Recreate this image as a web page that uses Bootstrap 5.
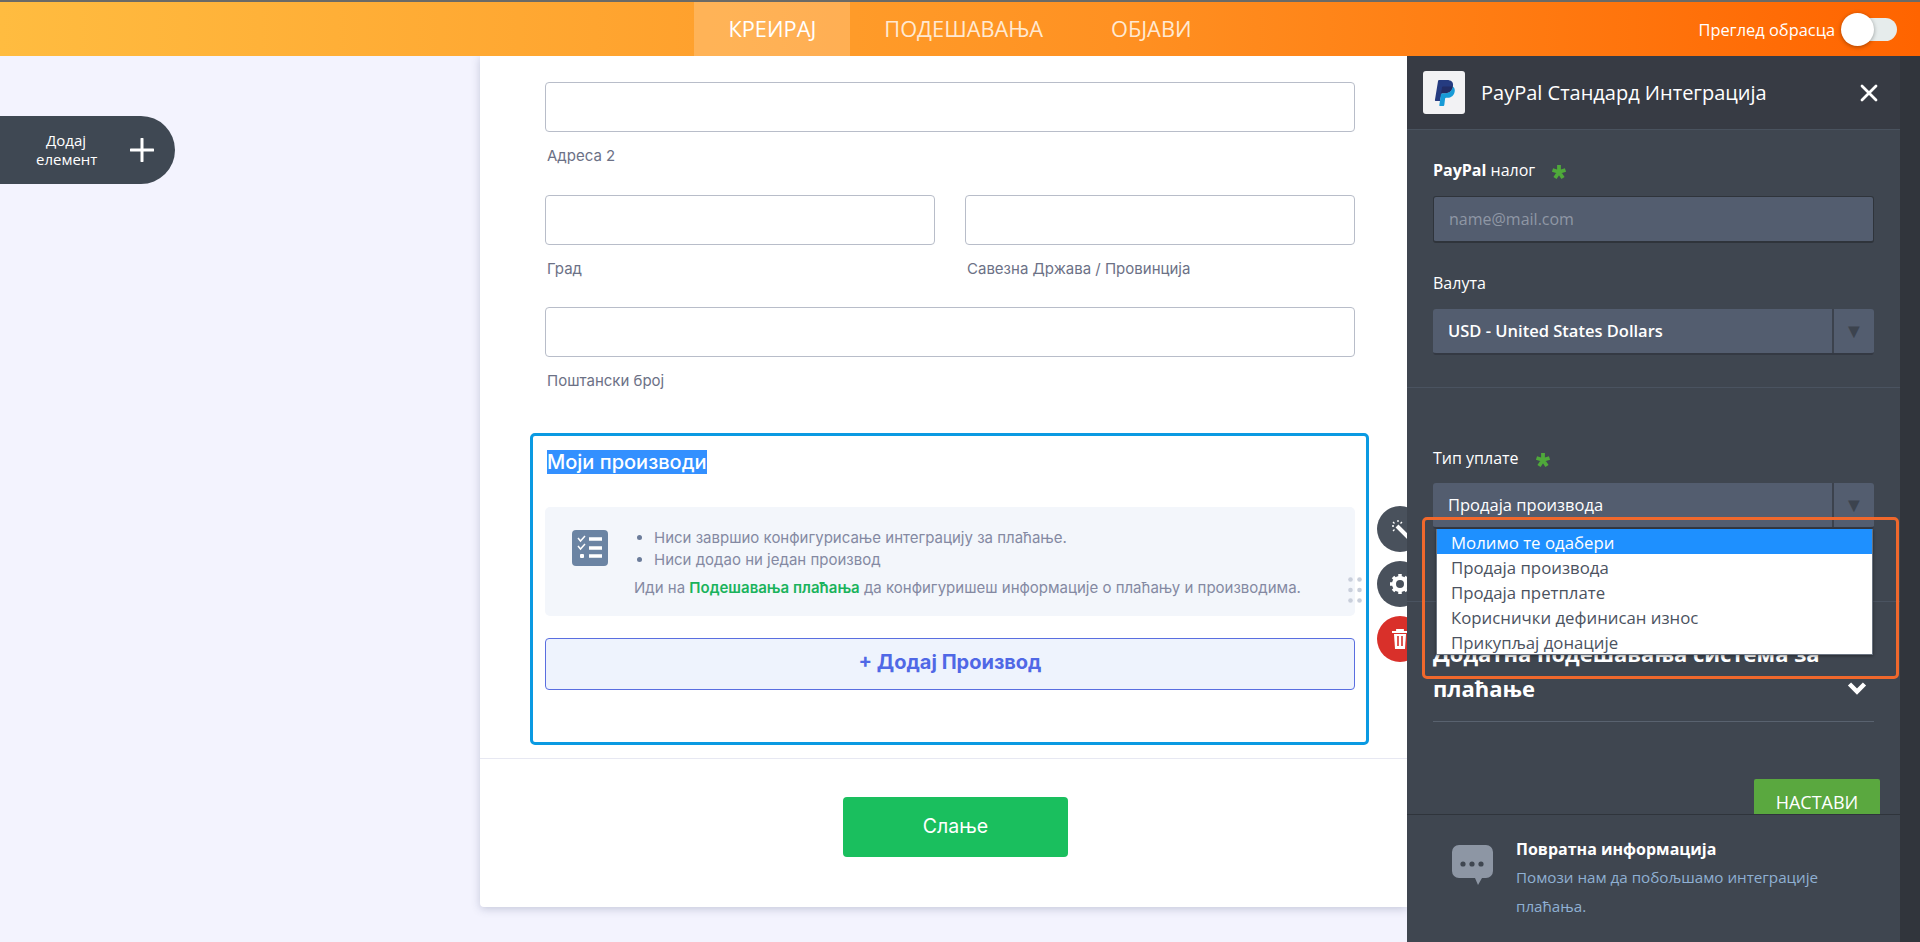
<!DOCTYPE html>
<html lang="sr">
<head>
  <meta charset="UTF-8" />
  <meta name="viewport" content="width=device-width, initial-scale=1" />
  <title>Креирај образац</title>
  <link href="https://cdn.jsdelivr.net/npm/bootstrap@5.3.0/dist/css/bootstrap.min.css" rel="stylesheet" />
  <style>
    html, body { height: 100%; margin: 0; overflow: hidden; }
    body { background: #f3f3fe; font-family: "Inter", "Liberation Sans", sans-serif; }

    .topbar { height: 56px; border-top: 2px solid #6b6a66; background: linear-gradient(to right, #ffbc40, #ff9122 58%, #ff6400); color: #fff; }
    .topbar .side { flex: 1 1 0; }
    .tab { padding: 0 34px; font: 21.8px/54px "Open Sans", sans-serif; color: #ffe9d2; text-decoration: none; }
    .tab.active { background: rgba(255,255,255,.2); color: #fff; }
    .preview { font: 16.400px "Open Sans", sans-serif; margin-right: 6px; }
    .switch { width: 56px; height: 33px; margin-right: 23px; }
    .switch .track { left: 9px; right: 0; top: 5px; bottom: 5px; background: #e6ecec; border-radius: 12px; }
    .switch .knob { left: 0; top: 0; width: 33px; height: 33px; background: #fff; border-radius: 50%; box-shadow: 0 1px 4px rgba(0,0,0,.35); }

    .workspace { height: 886px; }
    .left-col { width: 480px; padding-top: 60px; }
    .add-el { width: 175px; height: 68px; background: #3f4853; color: #fff; border-radius: 0 34px 34px 0; font: 15px/19px "Open Sans", sans-serif; padding-left: 36px; }
    .add-el .lbl { width: 60px; }
    .add-el svg { margin-left: 34px; }

    .form-card { width: 927px; height: 851px; background: #fff; box-shadow: 0 2px 8px rgba(60,70,110,.25); border-radius: 0 0 0 4px; padding-top: 26px; }
    .fields { padding-left: 65px; width: 875px; }
    .fld { height: 50px; border: 1px solid #b8bdc9; border-radius: 4px; box-shadow: none; }
    .sub { margin: 14px 0 28px 2px; font-size: 15px; line-height: 20px; color: #6c7186; }
    .sub.first { margin-bottom: 29px; }
    .sub.last { margin-bottom: 42px; }
    .cols { gap: 30px; }
    .cols > div { flex: 1 1 0; }

    .prod { position: relative; margin-left: 50px; width: 839px; height: 312px; border: 3px solid #0a9ae2; border-radius: 5px; padding: 14px 12px 0; }
    .prod h5 { font-size: 20px; line-height: 24px; font-weight: 500; margin: 0 0 33px 2px; }
    .prod h5 span { background: #3390ff; color: #fff; }
    .notice { height: 109px; width: 810px; background: #f3f6fb; border-radius: 5px; padding: 23px 0 0 27px; color: #8489a2; font-size: 15px; }
    .notice ul { margin: -3px 0 7px; padding-left: 20px; line-height: 22px; }
    .notice ul li::marker { color: #6b7c9a; }
    .notice p { margin: 0; line-height: 20px; }
    .notice b { color: #1ab35c; font-weight: 600; }
    .notice .txt { margin-left: 26px; }
    .add-prod { width: 810px; height: 52px; margin-top: 22px; background: #eef3fd; border: 1px solid #5a6ee0; border-radius: 4px; color: #5068e6; font-size: 20px; font-weight: 700; padding: 0 0 4px; }

    .tool { right: -57px; width: 46px; height: 46px; border-radius: 50%; background: #49515c; }
    .tool.t1 { top: 70px; }
    .tool.t2 { top: 125px; }
    .tool.t3 { top: 180px; background: #d9302a; }
    .grip { right: 4px; top: 140px; width: 14px; height: 26px; }

    .submit-row { margin-top: 13px; border-top: 1px solid #e7e8f2; padding-top: 38px; }
    .send { margin-left: 363px; width: 225px; height: 60px; background: #1abf5e; color: #fff; border: 0; border-radius: 4px; font-size: 19.500px; }

    .panel { width: 513px; background: #31353c; z-index: 5; }
    .panel-in { width: 493px; background: #3f4650; color: #fff; font-family: "Open Sans", sans-serif; }
    .panel-head { height: 74px; background: #373b44; border-bottom: 1px solid #49525e; padding: 0 22px 0 16px; }
    .pp-box { width: 42px; height: 43px; background: #f2f2f4; border-radius: 3px; margin-right: 16px; }
    .panel-head .ttl { font-size: 20px; }
    .panel-body { min-height: 0; overflow: hidden; padding: 0 26px; }
    .lab { font-size: 16px; line-height: 20px; height: 20px; margin: 30px 0 16px; }
    .lab.lab-type { margin-top: 60px; margin-bottom: 15px; }
    .star { margin: 4px 0 0 16px; flex: none; }
    .ctl { height: 47px; background: #535d6f; border: 1px solid #2f343b; border-width: 1px 1px 2px; border-radius: 3px; color: #fff; font-size: 16px; padding-left: 15px; }
    .ctl::placeholder { color: #8f97a5; }
    .ctl:focus { background: #535d6f; color: #fff; box-shadow: none; border-color: #2f343b; }
    .sel { height: 46px; background: #535d6f; border-radius: 3px; border-bottom: 2px solid #343943; font-size: 16.500px; padding-left: 15px; }
    .sel .arr { width: 42px; height: 100%; border-left: 2px solid #3c424d; color: #3c434e; font-size: 20px; }
    .rule { border-top: 1px solid #4a5360; margin: 32px -26px 0; }
    .rule.rule-low { margin-top: 72px; }
    .extra { font-size: 22px; line-height: 35px; font-weight: 700; margin: 34px 0 0; }
    .extra span { width: 400px; }
    .extra svg { margin: 0 7px 11px 0; }
    .extra-line { border-top: 1px solid #59626f; margin-top: 15px; }
    .next { display: block; margin: 57px -6px 0 auto; width: 126px; height: 54px; background: #5aa83f; color: #fff; border: 0; border-radius: 2px; font-size: 18px; padding: 0 0 8px; }

    .hilite { left: 15px; top: 387px; width: 477px; height: 162px; border: 3px solid #f0682c; border-radius: 5px; pointer-events: none; z-index: 6; }
    .opts { left: 29px; top: 399px; width: 437px; height: 126px; background: #fff; border: 1px solid #69727f; border-top: 0; box-shadow: 0 1px 3px rgba(0,0,0,.4); z-index: 6; font-size: 16.800px; color: #4b5260; }
    .opts div { height: 25px; line-height: 25px; padding: 1px 0 0 14px; }
    .opts .sel-opt { background: #1e90ff; color: #fff; }

    .panel-foot { height: 128px; flex: none; border-top: 1px solid #2f343b; padding: 26px 0 0 45px; background: #3f4650; }
    .panel-foot svg { margin-top: 4px; margin-right: 23px; }
    .panel-foot h6 { font-size: 16px; line-height: 20px; font-weight: 700; margin: -2px 0 4px; }
    .panel-foot p { font-size: 15.200px; line-height: 29px; color: #8fb0d3; margin: 0; width: 320px; }
  </style>
</head>
<body>

  <header class="topbar d-flex align-items-stretch">
    <div class="side"></div>
    <nav class="d-flex">
      <a class="tab active" href="#">КРЕИРАЈ</a>
      <a class="tab" href="#">ПОДЕШАВАЊА</a>
      <a class="tab" href="#">ОБЈАВИ</a>
    </nav>
    <div class="side d-flex justify-content-end align-items-center">
      <span class="preview">Преглед обрасца</span>
      <div class="switch position-relative">
        <div class="track position-absolute"></div>
        <div class="knob position-absolute"></div>
      </div>
    </div>
  </header>

  <div class="workspace d-flex overflow-hidden">
    <div class="left-col flex-shrink-0">
      <div class="add-el d-flex align-items-center">
        <div class="lbl text-center">Додај<br />елемент</div>
        <svg width="24" height="24" viewBox="0 0 24 24"><path d="M12 1v22M1 12h22" stroke="#fff" stroke-width="3" stroke-linecap="round" /></svg>
      </div>
    </div>

    <main class="form-card flex-shrink-0">
      <div class="fields">
        <input class="form-control fld" type="text" />
        <div class="sub first">Адреса 2</div>
        <div class="d-flex cols">
          <div>
            <input class="form-control fld" type="text" />
            <div class="sub">Град</div>
          </div>
          <div>
            <input class="form-control fld" type="text" />
            <div class="sub">Савезна Држава / Провинција</div>
          </div>
        </div>
        <input class="form-control fld" type="text" />
        <div class="sub last">Поштански број</div>
      </div>

      <section class="prod">
        <h5><span>Моји производи</span></h5>
        <div class="notice d-flex">
          <svg width="36" height="36" viewBox="0 0 36 36" class="flex-shrink-0">
            <rect width="36" height="36" rx="4" fill="#6b84a3" />
            <path d="M6 8l2.5 3L13 6M6 16l2.500 3L13 14" fill="none" stroke="#fff" stroke-width="1.500" />
            <rect x="8" y="24" width="4" height="4" rx="1" fill="#fff" />
            <path d="M17 9h13M17 18h13M17 26h13" stroke="#fff" stroke-width="3.500" />
          </svg>
          <div class="txt">
            <ul>
              <li>Ниси завршио конфигурисање интеграцију за плаћање.</li>
              <li>Ниси додао ни један производ</li>
            </ul>
            <p>Иди на <b>Подешавања плаћања</b> да конфигуришеш информације о плаћању и производима.</p>
          </div>
        </div>
        <button class="btn add-prod d-block" type="button">+ Додај Производ</button>

        <div class="grip position-absolute">
          <svg width="14" height="26" viewBox="0 0 14 26" fill="#c9cfdb"><circle cx="2.500" cy="2.500" r="2.300" /><circle cx="11.500" cy="2.500" r="2.300" /><circle cx="2.500" cy="13" r="2.300" /><circle cx="11.500" cy="13" r="2.300" /><circle cx="2.500" cy="23.500" r="2.300" /><circle cx="11.500" cy="23.500" r="2.300" /></svg>
        </div>
        <div class="tool t1 position-absolute d-flex align-items-center justify-content-center">
          <svg width="22" height="22" viewBox="0 0 22 22"><path d="M8 8l12 12" stroke="#fff" stroke-width="4" /><path d="M9 2v2M3 8h2M4 4l1.500 1.500M13 4l-1.500 1.500M4 13l1.500-1.500" stroke="#fff" stroke-width="1.300" /></svg>
        </div>
        <div class="tool t2 position-absolute d-flex align-items-center justify-content-center">
          <svg width="22" height="22" viewBox="0 0 22 22"><circle cx="11" cy="11" r="6" fill="none" stroke="#fff" stroke-width="4" /><path d="M11 1v4M11 17v4M1 11h4M17 11h4M4 4l3 3M15 15l3 3M18 4l-3 3M4 18l3-3" stroke="#fff" stroke-width="3.500" /></svg>
        </div>
        <div class="tool t3 position-absolute d-flex align-items-center justify-content-center">
          <svg width="18" height="20" viewBox="0 0 18 20"><path d="M1 3h16M6 3V1h6v2" fill="none" stroke="#fff" stroke-width="1.800" /><path d="M3 5h12l-1 15H4z" fill="#fff" /><path d="M7 7v10M11 7v10" stroke="#d9302a" stroke-width="1.600" /></svg>
        </div>
      </section>

      <div class="submit-row">
        <button class="btn send" type="button">Слање</button>
      </div>
    </main>

    <aside class="panel d-flex flex-shrink-0">
      <div class="panel-in d-flex flex-column">
        <div class="panel-head d-flex align-items-center flex-shrink-0">
          <div class="pp-box d-flex align-items-center justify-content-center">
            <svg width="22" height="26" viewBox="0 0 22 26">
              <path d="M7 21h-4.500c-.4 0-.6-.3-.6-.7L5 1.200C5.100.5 5.600 0 6.300 0h7.700c4 0 6.700 2 6 6-.8 4.700-4 7-8 7H9.500c-.5 0-.9.300-1 .8z" fill="#253b80" />
              <path d="M19.800 6.500c1.500 1 2.300 2.700 1.900 5-.7 4-3.500 6.300-7.300 6.300h-1.300c-.5 0-.9.300-1 .8L11.300 25c-.1.500-.500 1-1 1H6.800c-.4 0-.6-.3-.5-.7L8 14c.1-.5.5-.8 1-.8h3c4 0 7-2.500 7.800-6.700z" fill="#179bd7" />
              <path d="M19.800 6.500C19 10.700 16 13.200 12 13.200H9c-.5 0-.9.300-1 .8l-.9 5.200L9 7.500c.1-.5.5-.9 1-.9h6c1.500 0 2.800 0 3.800-.1z" fill="#222d65" />
            </svg>
          </div>
          <div class="ttl flex-grow-1">PayPal Стандард Интеграција</div>
          <svg width="18" height="18" viewBox="0 0 18 18"><path d="M2 2l14 14M16 2L2 16" stroke="#fff" stroke-width="2.800" stroke-linecap="round" /></svg>
        </div>

        <div class="panel-body flex-grow-1 position-relative">
          <label class="lab d-flex"><span><b>PayPal</b> налог</span><svg class="star" width="16" height="16" viewBox="0 0 16 16"><path d="M8 1v7M8 8l6.500-2M8 8l-6.500-2M8 8l4 6M8 8l-4 6" stroke="#4fa93a" stroke-width="3.800" /></svg></label>
          <input class="form-control ctl" type="text" placeholder="name@mail.com" />
          <label class="lab d-flex">Валута</label>
          <div class="sel d-flex align-items-center justify-content-between fw-semibold">
            <span>USD - United States Dollars</span>
            <span class="arr d-flex align-items-center justify-content-center">▼</span>
          </div>
          <div class="rule"></div>
          <label class="lab lab-type d-flex"><span>Тип уплате</span><svg class="star" width="16" height="16" viewBox="0 0 16 16"><path d="M8 1v7M8 8l6.500-2M8 8l-6.500-2M8 8l4 6M8 8l-4 6" stroke="#4fa93a" stroke-width="3.800" /></svg></label>
          <div class="sel d-flex align-items-center justify-content-between">
            <span>Продаја производа</span>
            <span class="arr d-flex align-items-center justify-content-center">▼</span>
          </div>
          <div class="rule rule-low"></div>
          <div class="extra d-flex justify-content-between">
            <span>Додатна подешавања система за плаћање</span>
            <svg class="align-self-end" width="20" height="14" viewBox="0 0 20 14"><path d="M2.500 3l7.500 7.500L17.500 3" fill="none" stroke="#fff" stroke-width="4.500" /></svg>
          </div>
          <div class="extra-line"></div>
          <button class="next" type="button">НАСТАВИ</button>

          <div class="hilite position-absolute"></div>
          <div class="opts position-absolute">
            <div class="sel-opt">Молимо те одабери</div>
            <div>Продаја производа</div>
            <div>Продаја претплате</div>
            <div>Кориснички дефинисан износ</div>
            <div>Прикупљај донације</div>
          </div>
        </div>

        <div class="panel-foot d-flex">
          <svg width="41" height="40" viewBox="0 0 41 40" class="flex-shrink-0">
            <path d="M7 0h27a7 7 0 0 1 7 7v19a7 7 0 0 1-7 7h-4l-4 7-3-7H7a7 7 0 0 1-7-7V7a7 7 0 0 1 7-7z" fill="#8d96a4" />
            <circle cx="11" cy="19" r="2.600" fill="#3f4650" /><circle cx="20" cy="19" r="2.600" fill="#3f4650" /><circle cx="29" cy="19" r="2.600" fill="#3f4650" />
          </svg>
          <div>
            <h6>Повратна информација</h6>
            <p>Помози нам да побољшамо интеграције плаћања.</p>
          </div>
        </div>
      </div>
    </aside>
  </div>

  <script src="https://cdn.jsdelivr.net/npm/bootstrap@5.3.0/dist/js/bootstrap.bundle.min.js"></script>
</body>
</html>
